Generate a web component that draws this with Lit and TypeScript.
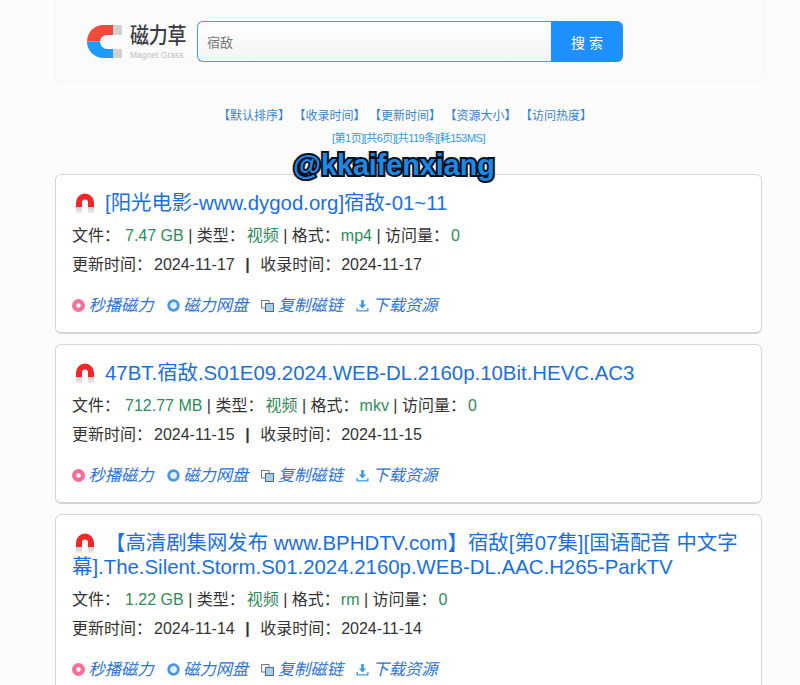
import { LitElement, html, css } from "lit";
import { customElement } from "lit/decorators.js";

const items = [
  { title: "[阳光电影-www.dygod.org]宿敌-01~11", size: "7.47 GB", fmt: "mp4", date: "2024-11-17" },
  { title: "47BT.宿敌.S01E09.2024.WEB-DL.2160p.10Bit.HEVC.AC3", size: "712.77 MB", fmt: "mkv", date: "2024-11-15" },
  { title: "【高清剧集网发布 www.BPHDTV.com】宿敌[第07集][国语配音 中文字幕].The.Silent.Storm.S01.2024.2160p.WEB-DL.AAC.H265-ParkTV", size: "1.22 GB", fmt: "rm", date: "2024-11-14" },
];

const magnet = html`<svg class="mag" width="20" height="20" viewBox="0 0 20 20">
  <defs><linearGradient id="mg" x1="0" y1="0" x2="0" y2="1"><stop offset="0" stop-color="#cfcaca"/><stop offset="1" stop-color="#efeded"/></linearGradient></defs>
  <path d="M1 14V9.500a9 9 0 0 1 18 0V14h-6V9.500a3 3 0 0 0-6 0V14z" fill="#f4262a"/>
  <rect x="1" y="14" width="6" height="6" fill="url(#mg)"/><rect x="13" y="14" width="6" height="6" fill="url(#mg)"/>
</svg>`;

const icons = [
  html`<svg class="ic" width="13" height="13" viewBox="0 0 13 13"><circle cx="6.500" cy="6.500" r="6.500" fill="#f4709a"/><circle cx="6.500" cy="6.500" r="2.200" fill="#fff"/></svg>`,
  html`<svg class="ic" width="13" height="13" viewBox="0 0 13 13"><circle cx="6.500" cy="6.500" r="4.800" fill="#e4effb" stroke="#4a97e4" stroke-width="2.800"/></svg>`,
  html`<svg class="ic" width="13" height="13" viewBox="0 0 13 13"><rect x="0.500" y="1.500" width="7.500" height="7.500" fill="#fff" stroke="#777"/><rect x="4.500" y="4.500" width="8" height="8" fill="#a9cfe8" stroke="#4c6b80"/></svg>`,
  html`<svg class="ic" width="13" height="13" viewBox="0 0 13 13"><path d="M5.200 1h2.600v4.600h2.400L6.500 9.400 2.800 5.600h2.400z" fill="#3b9bdc"/><path d="M0.500 9v3.500h12V9h-1.300v2.200H1.800V9z" fill="#3b9bdc"/></svg>`,
];
const labels = ["秒播磁力", "磁力网盘", "复制磁链", "下载资源"];
const sorts = ["【默认排序】", "【收录时间】", "【更新时间】", "【资源大小】", "【访问热度】"];

@customElement("app-root")
export class AppRoot extends LitElement {
  static styles = css`
    :host { display: block; height: 685px; overflow: hidden; position: relative; background: #fcfcfc;
      font-family: "Liberation Sans", "Noto Sans CJK SC", sans-serif; color: #333; }
    .wrap { width: 708px; margin-left: 55px; }
    .head { height: 81px; border: 1px solid #f6f6f6; border-top: 0; border-radius: 0 0 6px 6px; background: #fbfbfb;
      display: flex; align-items: center; padding-left: 31px; width: 676px; }
    .logo { display: flex; align-items: center; gap: 8px; width: 110px; height: 42px; flex: none; margin-top: 1px; }
    .logo svg { margin-top: 1px; flex: none; }
    .logotext { display: flex; flex-direction: column; align-items: flex-start; margin-top: 2px; }
    .cn { font-size: 19px; line-height: 24px; font-weight: 500; color: #3a3a40; letter-spacing: -0.2px; white-space: nowrap; transform: scaleY(1.12); }
    .en { font-size: 8.5px; line-height: 11px; margin-top: 2px; color: #bdbdbd; white-space: nowrap; }
    .search { display: flex; height: 41px; margin-top: 2px; }
    .input { width: 354px; box-sizing: border-box; border: 1px solid #4d9fd6; border-right: 0; border-radius: 6px 0 0 6px;
      background: linear-gradient(#ffffff, #f4f4f4); font-size: 13px; color: #777; padding-left: 9px; display: flex; align-items: center; }
    .btn { width: 72px; background: #1e90ff; border-radius: 0 6px 6px 0; color: #fff; font-size: 14px; display: flex; align-items: center; justify-content: center; letter-spacing: 4px; padding-left: 4px; box-sizing: border-box; }
    .sorts { display: flex; justify-content: center; gap: 3.5px; margin-top: 25px; font-size: 12px; line-height: 18px; color: #3385d6; padding-right: 8px; }
    .stat { text-align: center; font-size: 11px; line-height: 14px; color: #2f9be6; margin-top: 6px; padding-right: 1px; letter-spacing: -0.53px; }
    .list { display: flex; flex-direction: column; gap: 10px; margin-top: 29px; }
    .card { width: 707px; box-sizing: border-box; min-height: 160px; background: #fff; border: 1px solid #d5d5d5; border-bottom-width: 2px; border-radius: 6px; padding: 16px 16px 15px; }
    .title { font-size: 20.4px; line-height: 24px; color: #1a6fe0; word-break: break-all; }
    .mag { vertical-align: -3px; margin: 0 10px 0 3px; }
    .row { font-size: 16px; line-height: 20px; color: #333; margin-top: 9px; white-space: pre; }
    .title + .row { margin-top: 11px; }
    .g { color: #2e8b57; }
    .size { margin-left: 5px; }
    .v2 { margin-left: 2px; }
    .v1 { margin-left: 1px; }
    .d { margin-left: 2px; }
    .d2 { margin-left: 1px; }
    .sep { margin: 0 10.5px; font-weight: 700; }
    .acts { display: flex; align-items: center; margin-top: 18px; font-size: 16.3px; font-style: italic; color: #2a72d8; line-height: 24px; white-space: nowrap; }
    .act { display: flex; align-items: center; gap: 3.5px; margin-right: 13px; }
    .mark { position: absolute; left: 293px; top: 148px; font: 700 28.7px/34px "Liberation Sans", sans-serif; color: #1e88e5;
      -webkit-text-stroke: 4px #04101c; paint-order: stroke fill; white-space: nowrap; }
  `;
  render() {
    return html`<div class="wrap">
        <div class="head">
          <div class="logo">
            <svg width="35" height="33" viewBox="0 0 35 33">
              <path d="M26 0H16.500A16.500 16.500 0 0 0 0 16.500H13A7 6.500 0 0 1 20 10H26z" fill="#f04a3c"/>
              <path d="M0 16.500A16.500 16.500 0 0 0 16.500 33H26V24H20A7 7.500 0 0 1 13 16.500z" fill="#1e9bff"/>
              <rect x="26" y="0" width="9" height="10" fill="#d2d2d2"/><rect x="26" y="24" width="9" height="9" fill="#d2d2d2"/>
            </svg>
            <div class="logotext"><div class="cn">磁力草</div><div class="en">Magnet Grass</div></div>
          </div>
          <div class="search"><div class="input">宿敌</div><div class="btn">搜索</div></div>
        </div>
        <div class="sorts">${sorts.map((s) => html`<span>${s}</span>`)}</div>
        <div class="stat">[第1页][共6页][共119条][耗153MS]</div>
        <div class="list">
          ${items.map((it) => html`<div class="card">
            <div class="title">${magnet}${it.title}</div>
            <div class="row">文件：<span class="g size">${it.size}</span> | 类型：<span class="g v2">视频</span> | 格式：<span class="g v1">${it.fmt}</span> | 访问量：<span class="g v2">0</span></div>
            <div class="row">更新时间：<span class="d">${it.date}</span><span class="sep">|</span>收录时间：<span class="d2">${it.date}</span></div>
            <div class="acts">${labels.map((l, i) => html`<span class="act">${icons[i]}${l}</span>`)}</div>
          </div>`)}
        </div>
      </div>
      <div class="mark">@kkaifenxiang</div>`;
  }
}
